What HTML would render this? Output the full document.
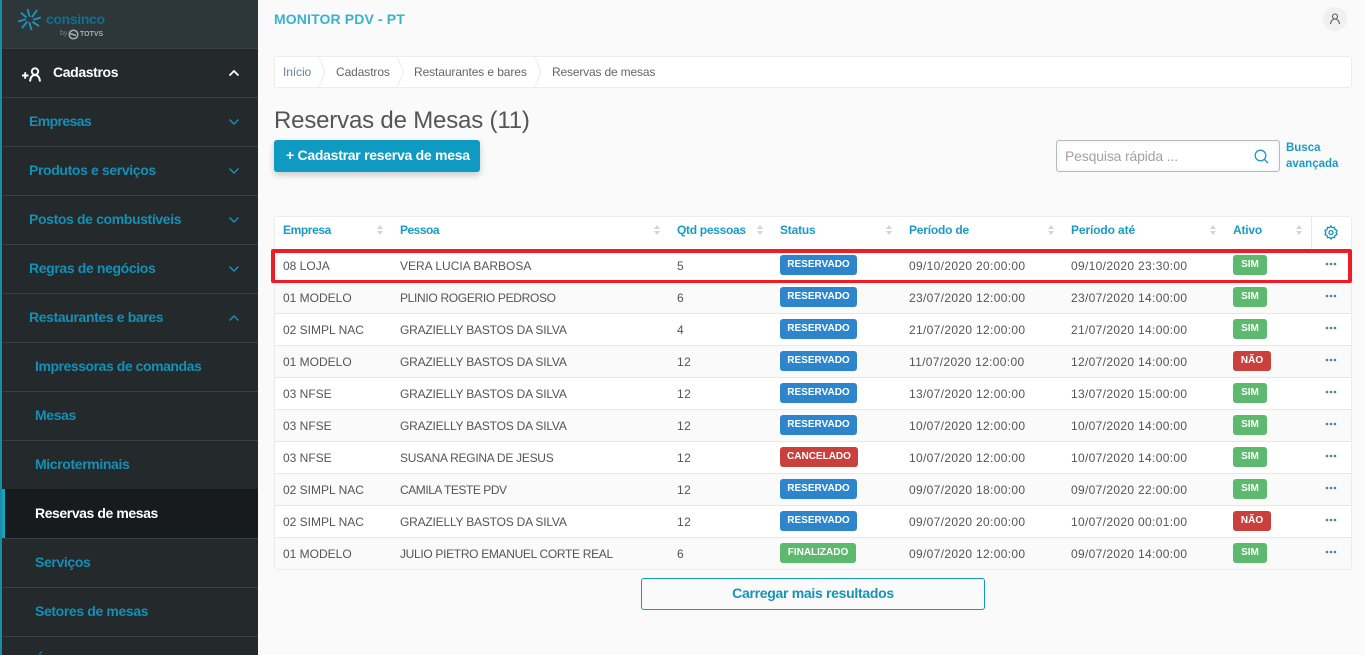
<!DOCTYPE html>
<html lang="pt"><head><meta charset="utf-8"><title>Reservas de Mesas</title>
<style>
*{box-sizing:border-box}
html,body{margin:0;padding:0;width:1365px;height:655px;overflow:hidden;background:#fafafa;font-family:"Liberation Sans",sans-serif}
.a{position:absolute;white-space:nowrap}
#side{position:absolute;left:0;top:0;width:258px;height:655px;background:#24292c;overflow:hidden}
#side .top{position:absolute;left:0;top:0;width:258px;height:48px;background:#2d3639}
#side .edge{position:absolute;left:0;top:0;width:2px;height:655px;background:#1a8ba8}
.ln{position:absolute;left:3px;width:255px;height:1px;background:#3a4245}
.m{position:absolute;left:29px;font-size:14px;line-height:20px;font-weight:bold;color:#1390b6;white-space:nowrap;letter-spacing:-.37px}
.s{left:35px}
.chev{position:absolute;left:228px;width:12px;height:8px}
.cell{position:absolute;font-size:12px;line-height:16px;color:#555;white-space:nowrap}
.d{letter-spacing:.33px}
.n{letter-spacing:.5px}
.g{letter-spacing:-.2px}
.th{position:absolute;top:222px;font-size:12px;line-height:16px;font-weight:bold;color:#1a9bc4;white-space:nowrap;letter-spacing:-.2px}
.sort{position:absolute;top:225px;width:6px;height:10px}
.row{position:absolute;left:275px;width:1076px;height:32px;border-bottom:1px solid #e8e8e8}
.b{position:absolute;height:20px;border-radius:3px;color:#fff;font-size:10px;font-weight:bold;line-height:20px;text-align:center;white-space:nowrap}
.bl{left:780px;width:77px;background:#2d86cb}
.gr{background:#5cb96d}
.rd{background:#c9403c}
.ac{left:1233px}
.dots{position:absolute;left:1325px;width:12px;height:4px}
.bc{font-size:12px;line-height:16px;color:#666;letter-spacing:-.1px;top:64px}
</style></head><body>
<div id="side">
<div class="top"></div><div class="edge"></div>
<svg class="a" style="left:18px;top:8px" width="23" height="23" viewBox="0 0 26 26" fill="none" stroke="#1c93b8" stroke-width="2.200" stroke-linecap="round"><path d="M13 9 11 2M16 10 21 3M18 13 25 11M17 16 23 20M13 17 15 24M10 16 5 22M8 13 1 15M9 10 4 6"/></svg>
<div class="a" style="left:46px;top:10px;font-size:14px;line-height:18px;color:#11708f;font-weight:bold;letter-spacing:-.35px">consinco</div>
<div class="a" style="left:60px;top:29px;font-size:7px;line-height:9px;color:#7c8588">by</div>
<svg class="a" style="left:68px;top:29px" width="11" height="11" viewBox="0 0 11 11" fill="none" stroke="#aab0b2" stroke-width="1.500"><circle cx="5.500" cy="5.500" r="4.300"/><path d="M2 4.500 8 6.500"/></svg>
<div class="a" style="left:80px;top:30px;font-size:7px;line-height:9px;color:#aab0b2;font-weight:bold">TOTVS</div>
<div class="ln" style="top:48px"></div><div class="ln" style="top:97px"></div><div class="ln" style="top:146px"></div><div class="ln" style="top:195px"></div><div class="ln" style="top:244px"></div><div class="ln" style="top:293px"></div><div class="ln" style="top:342px"></div><div class="ln" style="top:391px"></div><div class="ln" style="top:440px"></div><div class="ln" style="top:538px"></div><div class="ln" style="top:587px"></div><div class="ln" style="top:636px"></div>
<svg class="a" style="left:21px;top:67px" width="20" height="15" viewBox="0 0 20 15" fill="none" stroke="#fff" stroke-width="1.900"><path d="M1 8.500H7.500M4.200 5.200V11.800"/><circle cx="14" cy="4.500" r="3.200"/><path d="M9 14.500C9.500 9.500 11.500 8 14 8S18.500 9.500 19 14.500"/></svg>
<div class="m" style="left:53px;top:62px;color:#fff">Cadastros</div>
<svg class="chev" style="top:69px" viewBox="0 0 12 8" fill="none" stroke="#fff" stroke-width="1.800"><path d="M1.500 6.500 6 2l4.500 4.500"/></svg>
<div class="m" style="top:111px;letter-spacing:-.6px">Empresas</div>
<svg class="chev" style="top:118px" viewBox="0 0 12 8" fill="none" stroke="#1390b6" stroke-width="1.500"><path d="M1.500 1.500 6 6l4.500-4.500"/></svg>
<div class="m" style="top:160px">Produtos e serviços</div>
<svg class="chev" style="top:167px" viewBox="0 0 12 8" fill="none" stroke="#1390b6" stroke-width="1.500"><path d="M1.500 1.500 6 6l4.500-4.500"/></svg>
<div class="m" style="top:209px">Postos de combustíveis</div>
<svg class="chev" style="top:216px" viewBox="0 0 12 8" fill="none" stroke="#1390b6" stroke-width="1.500"><path d="M1.500 1.500 6 6l4.500-4.500"/></svg>
<div class="m" style="top:258px">Regras de negócios</div>
<svg class="chev" style="top:265px" viewBox="0 0 12 8" fill="none" stroke="#1390b6" stroke-width="1.500"><path d="M1.500 1.500 6 6l4.500-4.500"/></svg>
<div class="m" style="top:307px">Restaurantes e bares</div>
<svg class="chev" style="top:314px" viewBox="0 0 12 8" fill="none" stroke="#1390b6" stroke-width="1.500"><path d="M1.500 6.500 6 2l4.500 4.500"/></svg>
<div class="m s" style="top:356px;letter-spacing:-.45px">Impressoras de comandas</div>
<div class="m s" style="top:405px">Mesas</div>
<div class="m s" style="top:454px">Microterminais</div>
<div class="a" style="left:3px;top:489px;width:255px;height:49px;background:#171b1d"></div>
<div class="a" style="left:2px;top:489px;width:3px;height:49px;background:#17a2bd"></div>
<div class="m s" style="top:503px;color:#fff;letter-spacing:-.42px">Reservas de mesas</div>
<div class="m s" style="top:552px">Serviços</div>
<div class="m s" style="top:601px">Setores de mesas</div>
<div class="m s" style="top:649px">Áreas</div>
</div>

<div class="a" style="left:274px;top:10px;font-size:14px;line-height:18px;font-weight:bold;color:#37b4cb;letter-spacing:.13px">MONITOR PDV - PT</div>
<div class="a" style="left:1323px;top:7px;width:24px;height:24px;border-radius:50%;background:#f0f0f0"></div>
<svg class="a" style="left:1329px;top:13px" width="12" height="12" viewBox="0 0 12 12" fill="none" stroke="#555" stroke-width="1.100"><circle cx="6" cy="3.500" r="2.500"/><path d="M1.500 11C2 7.500 4 6 6 6s4 1.500 4.500 5"/></svg>

<div class="a" style="left:274px;top:56px;width:1078px;height:32px;background:#fff;border:1px solid #ececec;border-radius:3px"></div>
<svg class="a" style="left:274px;top:56px" width="280" height="32" fill="none" stroke="#ececec"><path d="M45 1 51 16 45 31M123 1 130 16 123 31M261 1 267 16 261 31"/></svg>
<div class="a bc" style="left:283px;color:#6a7f95">Início</div>
<div class="a bc" style="left:336px">Cadastros</div>
<div class="a bc" style="left:414px">Restaurantes e bares</div>
<div class="a bc" style="left:552px;letter-spacing:-.17px">Reservas de mesas</div>

<div class="a" style="left:274px;top:106px;font-size:24px;line-height:30px;color:#555;letter-spacing:-.18px">Reservas de Mesas (11)</div>
<div class="a" style="left:274px;top:140px;width:206px;height:32px;background:#0e9ac1;border-radius:3px;box-shadow:0 3px 7px rgba(0,0,0,.2);color:#fff;font-size:14px;font-weight:bold;line-height:30px;padding-left:12px;letter-spacing:-.27px">+ Cadastrar reserva de mesa</div>

<div class="a" style="left:1056px;top:140px;width:224px;height:32px;background:#fff;border:1px solid #b5bcbe;border-radius:3px;box-shadow:inset 0 0 5px rgba(0,0,0,.08);color:#a2a2a2;font-size:14px;line-height:30px;padding-left:8px;letter-spacing:-.16px">Pesquisa rápida ...</div>
<svg class="a" style="left:1254px;top:149px" width="15" height="15" viewBox="0 0 15 15" fill="none" stroke="#1a9bc4" stroke-width="1.300"><circle cx="6.500" cy="6.500" r="5.300"/><path d="M10.500 10.500 14 14"/></svg>
<div class="a" style="left:1286px;top:140px;font-size:11.500px;line-height:16px;font-weight:bold;color:#1a9bc4">Busca<br>avançada</div>

<div class="a" style="left:274px;top:216px;width:1078px;height:354px;background:#fff;border:1px solid #ececec;border-radius:3px"></div>
<div class="a" style="left:275px;top:249px;width:1076px;height:1px;background:#e4e4e4"></div>
<div class="a" style="left:1311px;top:217px;width:1px;height:32px;background:#e8e8e8"></div>
<div class="th" style="left:283px;letter-spacing:-.4px">Empresa</div>
<div class="th" style="left:400px;letter-spacing:-.5px">Pessoa</div>
<div class="th" style="left:677px;letter-spacing:-.3px">Qtd pessoas</div>
<div class="th" style="left:780px">Status</div>
<div class="th" style="left:909px">Período de</div>
<div class="th" style="left:1071px;letter-spacing:-.12px">Período até</div>
<div class="th" style="left:1233px">Ativo</div>
<svg class="sort" style="left:377px" viewBox="0 0 6 10" fill="#d4d4d4"><path d="M3 0 6 4H0ZM3 10 0 6H6Z"/></svg>
<svg class="sort" style="left:654px" viewBox="0 0 6 10" fill="#d4d4d4"><path d="M3 0 6 4H0ZM3 10 0 6H6Z"/></svg>
<svg class="sort" style="left:757px" viewBox="0 0 6 10" fill="#d4d4d4"><path d="M3 0 6 4H0ZM3 10 0 6H6Z"/></svg>
<svg class="sort" style="left:886px" viewBox="0 0 6 10" fill="#d4d4d4"><path d="M3 0 6 4H0ZM3 10 0 6H6Z"/></svg>
<svg class="sort" style="left:1048px" viewBox="0 0 6 10" fill="#d4d4d4"><path d="M3 0 6 4H0ZM3 10 0 6H6Z"/></svg>
<svg class="sort" style="left:1210px" viewBox="0 0 6 10" fill="#d4d4d4"><path d="M3 0 6 4H0ZM3 10 0 6H6Z"/></svg>
<svg class="sort" style="left:1296px" viewBox="0 0 6 10" fill="#d4d4d4"><path d="M3 0 6 4H0ZM3 10 0 6H6Z"/></svg>
<svg class="a" style="left:1324px;top:225px" width="14" height="15" viewBox="0 0 14 15" fill="none" stroke="#1a8fb5" stroke-width="1.300"><path d="M7 1 8.300 2.700 10.500 2.400 11 4.500 13 5.500 12.200 7.500 13 9.500 11 10.500 10.500 12.600 8.300 12.300 7 14 5.700 12.300 3.500 12.600 3 10.500 1 9.500 1.800 7.500 1 5.500 3 4.500 3.500 2.400 5.700 2.700Z"/><circle cx="7" cy="7.500" r="2"/></svg>

<div class="row" style="top:250px;background:#fff"></div>
<div class="row" style="top:282px;background:#fafafa"></div>
<div class="row" style="top:314px;background:#fff"></div>
<div class="row" style="top:346px;background:#fafafa"></div>
<div class="row" style="top:378px;background:#fff"></div>
<div class="row" style="top:410px;background:#fafafa"></div>
<div class="row" style="top:442px;background:#fff"></div>
<div class="row" style="top:474px;background:#fafafa"></div>
<div class="row" style="top:506px;background:#fff"></div>
<div class="row" style="top:538px;background:#fafafa;height:31px;border:0"></div>

<div class="cell" style="left:283px;top:258px">08 LOJA</div><div class="cell" style="left:400px;top:258px">VERA LUCIA BARBOSA</div><div class="cell" style="left:677px;top:258px">5</div><div class="b bl" style="top:255px">RESERVADO</div><div class="cell d" style="left:909px;top:258px">09/10/2020 20:00:00</div><div class="cell d" style="left:1071px;top:258px">09/10/2020 23:30:00</div><div class="b gr ac" style="top:255px;width:34px">SIM</div>
<div class="cell" style="left:283px;top:290px">01 MODELO</div><div class="cell" style="left:400px;top:290px;letter-spacing:-.32px">PLINIO ROGERIO PEDROSO</div><div class="cell" style="left:677px;top:290px">6</div><div class="b bl" style="top:287px">RESERVADO</div><div class="cell d" style="left:909px;top:290px">23/07/2020 12:00:00</div><div class="cell d" style="left:1071px;top:290px">23/07/2020 14:00:00</div><div class="b gr ac" style="top:287px;width:34px">SIM</div>
<div class="cell" style="left:283px;top:322px">02 SIMPL NAC</div><div class="cell g" style="left:400px;top:322px">GRAZIELLY BASTOS DA SILVA</div><div class="cell" style="left:677px;top:322px">4</div><div class="b bl" style="top:319px">RESERVADO</div><div class="cell d" style="left:909px;top:322px">21/07/2020 12:00:00</div><div class="cell d" style="left:1071px;top:322px">21/07/2020 14:00:00</div><div class="b gr ac" style="top:319px;width:34px">SIM</div>
<div class="cell" style="left:283px;top:354px">01 MODELO</div><div class="cell g" style="left:400px;top:354px">GRAZIELLY BASTOS DA SILVA</div><div class="cell n" style="left:677px;top:354px">12</div><div class="b bl" style="top:351px">RESERVADO</div><div class="cell d" style="left:909px;top:354px">11/07/2020 12:00:00</div><div class="cell d" style="left:1071px;top:354px">12/07/2020 14:00:00</div><div class="b rd ac" style="top:351px;width:38px">NÃO</div>
<div class="cell" style="left:283px;top:386px">03 NFSE</div><div class="cell g" style="left:400px;top:386px">GRAZIELLY BASTOS DA SILVA</div><div class="cell n" style="left:677px;top:386px">12</div><div class="b bl" style="top:383px">RESERVADO</div><div class="cell d" style="left:909px;top:386px">13/07/2020 12:00:00</div><div class="cell d" style="left:1071px;top:386px">13/07/2020 15:00:00</div><div class="b gr ac" style="top:383px;width:34px">SIM</div>
<div class="cell" style="left:283px;top:418px">03 NFSE</div><div class="cell g" style="left:400px;top:418px">GRAZIELLY BASTOS DA SILVA</div><div class="cell n" style="left:677px;top:418px">12</div><div class="b bl" style="top:415px">RESERVADO</div><div class="cell d" style="left:909px;top:418px">10/07/2020 12:00:00</div><div class="cell d" style="left:1071px;top:418px">10/07/2020 14:00:00</div><div class="b gr ac" style="top:415px;width:34px">SIM</div>
<div class="cell" style="left:283px;top:450px">03 NFSE</div><div class="cell" style="left:400px;top:450px;letter-spacing:-.27px">SUSANA REGINA DE JESUS</div><div class="cell n" style="left:677px;top:450px">12</div><div class="b rd" style="left:780px;width:78px;top:447px">CANCELADO</div><div class="cell d" style="left:909px;top:450px">10/07/2020 12:00:00</div><div class="cell d" style="left:1071px;top:450px">10/07/2020 14:00:00</div><div class="b gr ac" style="top:447px;width:34px">SIM</div>
<div class="cell" style="left:283px;top:482px">02 SIMPL NAC</div><div class="cell" style="left:400px;top:482px;letter-spacing:-.45px">CAMILA TESTE PDV</div><div class="cell n" style="left:677px;top:482px">12</div><div class="b bl" style="top:479px">RESERVADO</div><div class="cell d" style="left:909px;top:482px">09/07/2020 18:00:00</div><div class="cell d" style="left:1071px;top:482px">09/07/2020 22:00:00</div><div class="b gr ac" style="top:479px;width:34px">SIM</div>
<div class="cell" style="left:283px;top:514px">02 SIMPL NAC</div><div class="cell g" style="left:400px;top:514px">GRAZIELLY BASTOS DA SILVA</div><div class="cell n" style="left:677px;top:514px">12</div><div class="b bl" style="top:511px">RESERVADO</div><div class="cell d" style="left:909px;top:514px">09/07/2020 20:00:00</div><div class="cell d" style="left:1071px;top:514px">10/07/2020 00:01:00</div><div class="b rd ac" style="top:511px;width:38px">NÃO</div>
<div class="cell" style="left:283px;top:546px">01 MODELO</div><div class="cell" style="left:400px;top:546px;letter-spacing:-.32px">JULIO PIETRO EMANUEL CORTE REAL</div><div class="cell" style="left:677px;top:546px">6</div><div class="b gr" style="left:780px;width:76px;top:543px">FINALIZADO</div><div class="cell d" style="left:909px;top:546px">09/07/2020 12:00:00</div><div class="cell d" style="left:1071px;top:546px">09/07/2020 14:00:00</div><div class="b gr ac" style="top:543px;width:34px">SIM</div>

<svg class="dots" style="top:262px" viewBox="0 0 12 4" fill="#4a7fa0"><circle cx="2" cy="2" r="1.300"/><circle cx="6" cy="2" r="1.300"/><circle cx="10" cy="2" r="1.300"/></svg>
<svg class="dots" style="top:294px" viewBox="0 0 12 4" fill="#4a7fa0"><circle cx="2" cy="2" r="1.300"/><circle cx="6" cy="2" r="1.300"/><circle cx="10" cy="2" r="1.300"/></svg>
<svg class="dots" style="top:326px" viewBox="0 0 12 4" fill="#4a7fa0"><circle cx="2" cy="2" r="1.300"/><circle cx="6" cy="2" r="1.300"/><circle cx="10" cy="2" r="1.300"/></svg>
<svg class="dots" style="top:358px" viewBox="0 0 12 4" fill="#4a7fa0"><circle cx="2" cy="2" r="1.300"/><circle cx="6" cy="2" r="1.300"/><circle cx="10" cy="2" r="1.300"/></svg>
<svg class="dots" style="top:390px" viewBox="0 0 12 4" fill="#4a7fa0"><circle cx="2" cy="2" r="1.300"/><circle cx="6" cy="2" r="1.300"/><circle cx="10" cy="2" r="1.300"/></svg>
<svg class="dots" style="top:422px" viewBox="0 0 12 4" fill="#4a7fa0"><circle cx="2" cy="2" r="1.300"/><circle cx="6" cy="2" r="1.300"/><circle cx="10" cy="2" r="1.300"/></svg>
<svg class="dots" style="top:454px" viewBox="0 0 12 4" fill="#4a7fa0"><circle cx="2" cy="2" r="1.300"/><circle cx="6" cy="2" r="1.300"/><circle cx="10" cy="2" r="1.300"/></svg>
<svg class="dots" style="top:486px" viewBox="0 0 12 4" fill="#4a7fa0"><circle cx="2" cy="2" r="1.300"/><circle cx="6" cy="2" r="1.300"/><circle cx="10" cy="2" r="1.300"/></svg>
<svg class="dots" style="top:518px" viewBox="0 0 12 4" fill="#4a7fa0"><circle cx="2" cy="2" r="1.300"/><circle cx="6" cy="2" r="1.300"/><circle cx="10" cy="2" r="1.300"/></svg>
<svg class="dots" style="top:550px" viewBox="0 0 12 4" fill="#4a7fa0"><circle cx="2" cy="2" r="1.300"/><circle cx="6" cy="2" r="1.300"/><circle cx="10" cy="2" r="1.300"/></svg>

<div class="a" style="left:271px;top:249px;width:1081px;height:34px;border:solid #ee1c25;border-width:4px 4px 3px;border-radius:2px"></div>
<div class="a" style="left:641px;top:578px;width:344px;height:32px;border:1px solid #0e9ac1;border-radius:3px;color:#1a92b8;font-size:14px;font-weight:bold;line-height:29px;text-align:center;letter-spacing:-.3px">Carregar mais resultados</div>
</body></html>
